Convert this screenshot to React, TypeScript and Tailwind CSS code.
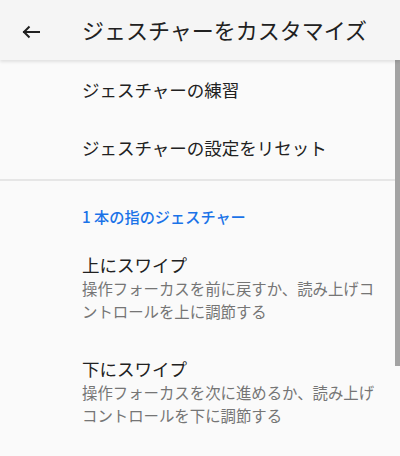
import React from "react";

const font = { fontFamily: '"Noto Sans CJK JP", "Noto Sans", sans-serif' };

const BackArrow = () => (
  <svg width="18" height="14" viewBox="0 0 18 14" fill="none" stroke="#212121" strokeWidth="2" strokeLinecap="square">
    <path d="M17 7H2" />
    <path d="M7.5 1.5L2 7l5.5 5.5" strokeLinecap="butt" />
  </svg>
);

const SwipeItem = ({ title, lines, className }: { title: string; lines: string[]; className?: string }) => (
  <div className={"pl-[82px] " + (className ?? "")}>
    <div className="text-[17.5px] leading-[24px] text-[#212121]">{title}</div>
    <div className="text-[15.4px] leading-[22.5px] text-[#757575]">
      {lines.map((l, i) => (
        <div key={i}>{l}</div>
      ))}
    </div>
  </div>
);

export default function App() {
  return (
    <div className="relative h-[456px] w-[400px] overflow-hidden bg-[#fafafa]" style={font}>
      {/* toolbar */}
      <header className="relative z-10 flex h-[60px] items-center bg-[#f5f5f5] shadow-[0_2px_3px_rgba(0,0,0,0.10)]">
        <div className="flex w-[82px] items-center pl-[22px] pt-[3px]">
          <BackArrow />
        </div>
        <h1 className="pb-[1px] text-[22px] font-normal text-[#212121]">ジェスチャーをカスタマイズ</h1>
      </header>

      <div className="pt-[3px]">
        <div className="flex h-[58px] items-center pb-[4px] pl-[82px] text-[17.5px] text-[#212121]">ジェスチャーの練習</div>
        <div className="flex h-[58px] items-center pb-[4px] pl-[82px] text-[17.5px] text-[#212121]">ジェスチャーの設定をリセット</div>
      </div>
      <div className="h-[2px] bg-[#e6e6e6]" />

      <div className="pl-[82px] pt-[25px] text-[15.2px] font-medium leading-[20px] text-[#1a73e8]">1 本の指のジェスチャー</div>

      <SwipeItem
        className="mt-[27px]"
        title="上にスワイプ"
        lines={["操作フォーカスを前に戻すか、読み上げコ", "ントロールを上に調節する"]}
      />
      <SwipeItem
        className="mt-[35px]"
        title="下にスワイプ"
        lines={["操作フォーカスを次に進めるか、読み上げ", "コントロールを下に調節する"]}
      />

      {/* scroll indicator */}
      <div className="absolute right-0 top-[60px] h-[306px] w-[5px] bg-[#a3a3a3]" />
    </div>
  );
}
